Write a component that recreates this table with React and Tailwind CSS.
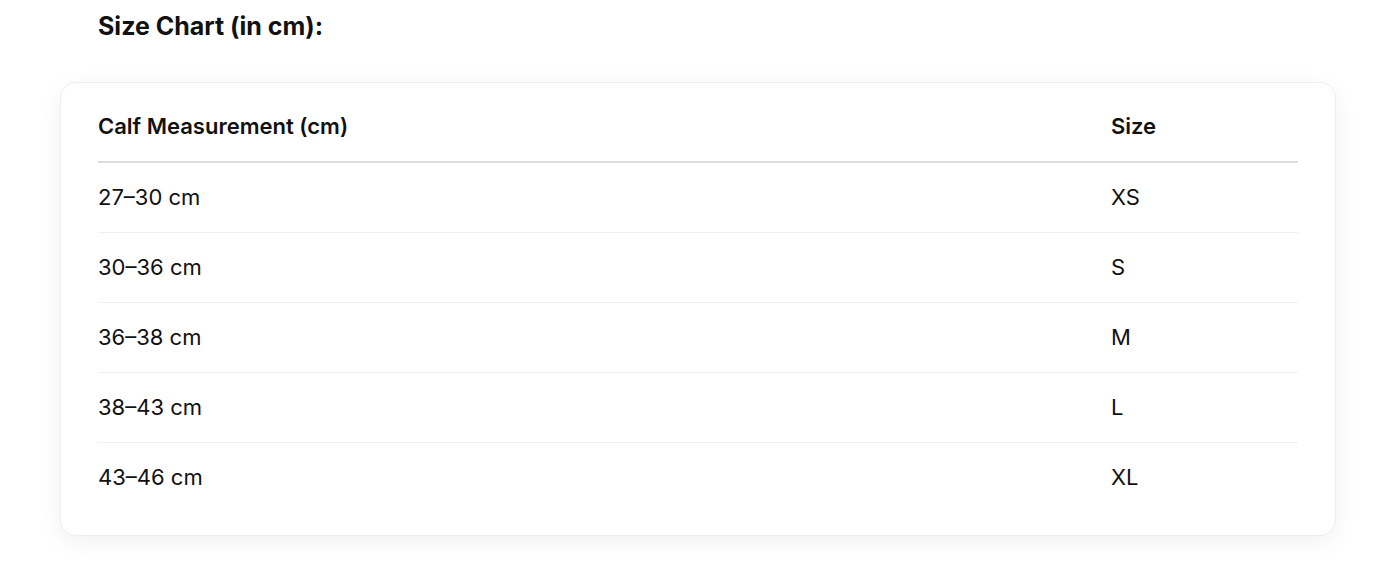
import React from 'react';

const rows = [
  { range: '27–30 cm', size: 'XS' },
  { range: '30–36 cm', size: 'S' },
  { range: '36–38 cm', size: 'M' },
  { range: '38–43 cm', size: 'L' },
  { range: '43–46 cm', size: 'XL' },
];

export default function App() {
  return (
    <div className="min-h-[564px] bg-white px-[60px] text-[#111111]" style={{ fontFamily: 'Inter, "Noto Sans", sans-serif' }}>
      <h2 className="px-[38px] pt-[10px] text-[25px] font-bold leading-[32px]">Size Chart (in cm):</h2>

      <div className="mt-[40px] w-[1276px] rounded-[16px] border border-[#eeeeee] bg-white px-[37px] pt-[9px] pb-[23px] shadow-[0_6px_24px_rgba(0,0,0,0.06)]">
        <table className="w-full border-collapse text-left">
          <thead>
            <tr className="border-b-2 border-[#dcdcdc]">
              <th className="h-[70px] w-[1013px] p-0 text-[22px] font-semibold">Calf Measurement (cm)</th>
              <th className="h-[70px] p-0 text-[22px] font-semibold">Size</th>
            </tr>
          </thead>
          <tbody>
            {rows.map((row, i) => (
              <tr key={row.size} className={i < rows.length - 1 ? 'border-b border-[#f0f0f0]' : ''}>
                <td className="h-[70px] p-0 text-[22px]">{row.range}</td>
                <td className="h-[70px] p-0 text-[22px]">{row.size}</td>
              </tr>
            ))}
          </tbody>
        </table>
      </div>
    </div>
  );
}
